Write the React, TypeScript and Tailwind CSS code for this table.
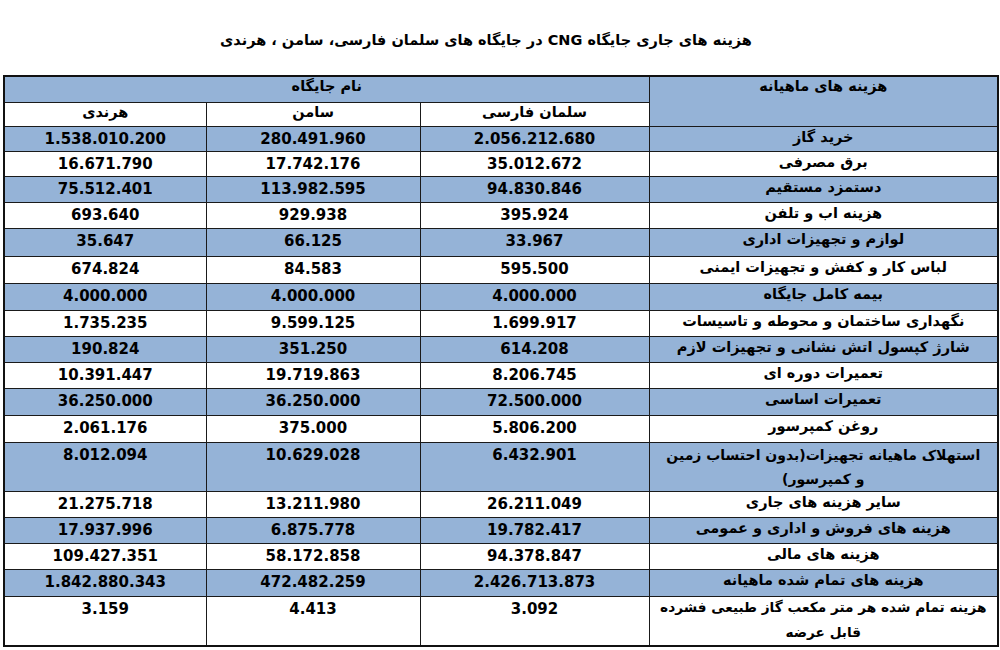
const rows: { label: React.ReactNode; salman: string; samen: string; harandi: string; h: string }[] = [
  { label: 'خرید گاز', salman: '2.056.212.680', samen: '280.491.960', harandi: '1.538.010.200', h: 'h-[25px]' },
  { label: 'برق مصرفی', salman: '35.012.672', samen: '17.742.176', harandi: '16.671.790', h: 'h-[25px]' },
  { label: 'دستمزد مستقیم', salman: '94.830.846', samen: '113.982.595', harandi: '75.512.401', h: 'h-[26px]' },
  { label: 'هزینه اب و تلفن', salman: '395.924', samen: '929.938', harandi: '693.640', h: 'h-[26px]' },
  { label: 'لوازم و تجهیزات اداری', salman: '33.967', samen: '66.125', harandi: '35.647', h: 'h-[28px]' },
  { label: 'لباس کار و کفش و تجهیزات ایمنی', salman: '595.500', samen: '84.583', harandi: '674.824', h: 'h-[27px]' },
  { label: 'بیمه کامل جایگاه', salman: '4.000.000', samen: '4.000.000', harandi: '4.000.000', h: 'h-[27px]' },
  { label: 'نگهداری ساختمان و محوطه و تاسیسات', salman: '1.699.917', samen: '9.599.125', harandi: '1.735.235', h: 'h-[26px]' },
  { label: 'شارژ کپسول اتش نشانی  و تجهیزات لازم', salman: '614.208', samen: '351.250', harandi: '190.824', h: 'h-[26px]' },
  { label: 'تعمیرات دوره ای', salman: '8.206.745', samen: '19.719.863', harandi: '10.391.447', h: 'h-[26px]' },
  { label: 'تعمیرات اساسی', salman: '72.500.000', samen: '36.250.000', harandi: '36.250.000', h: 'h-[27px]' },
  { label: 'روغن کمپرسور', salman: '5.806.200', samen: '375.000', harandi: '2.061.176', h: 'h-[27px]' },
  {
    label: (
      <span className="-mt-[2px] block text-[14px] leading-[24px]">
        استهلاک ماهیانه تجهیزات(بدون احتساب زمین
        <br />
        و کمپرسور)
      </span>
    ),
    salman: '6.432.901',
    samen: '10.629.028',
    harandi: '8.012.094',
    h: 'h-[49px]',
  },
  { label: 'سایر هزینه های جاری', salman: '26.211.049', samen: '13.211.980', harandi: '21.275.718', h: 'h-[26px]' },
  { label: 'هزینه های فروش و اداری و عمومی', salman: '19.782.417', samen: '6.875.778', harandi: '17.937.996', h: 'h-[26px]' },
  { label: 'هزینه های مالی', salman: '94.378.847', samen: '58.172.858', harandi: '109.427.351', h: 'h-[26px]' },
  { label: 'هزینه های تمام شده ماهیانه', salman: '2.426.713.873', samen: '472.482.259', harandi: '1.842.880.343', h: 'h-[27px]' },
  {
    label: (
      <span className="-mt-[4px] block text-[13.7px] leading-[25px]">
        هزینه تمام شده هر متر مکعب گاز طبیعی فشرده
        <br />
        قابل عرضه
      </span>
    ),
    salman: '3.092',
    samen: '4.413',
    harandi: '3.159',
    h: 'h-[48px]',
  },
];

const fa = "font-['DejaVu_Sans',sans-serif] font-bold";
const cell = 'border border-[#1a1a1a] align-top text-center';

export default function App() {
  return (
    <div className="h-[650px] w-[1000px] bg-white text-black overflow-hidden">
      <h1 dir="rtl" className={`${fa} pt-[29px] pr-[28px] text-center text-[14.5px] leading-[22px]`}>
        هزینه های جاری جایگاه CNG در جایگاه های سلمان فارسی، سامن ، هرندی
      </h1>

      <table dir="rtl" className="mt-[24px] ml-[3px] w-[994px] table-fixed border-collapse border-2 border-[#111]">
        <colgroup>
          <col className="w-[349px]" />
          <col className="w-[229px]" />
          <col className="w-[214px]" />
          <col className="w-[202px]" />
        </colgroup>
        <thead>
          <tr className="h-[26px] bg-[#95b3d7]">
            <th rowSpan={2} className={`${cell} ${fa} pt-0 text-[14.5px] leading-[18px]`}>
              هزینه های ماهیانه
            </th>
            <th colSpan={3} className={`${cell} ${fa} pt-0 text-[14.5px] leading-[18px]`}>
              نام جایگاه
            </th>
          </tr>
          <tr className="h-[24px] bg-white">
            <th className={`${cell} ${fa} pt-0 text-[14.5px] leading-[18px]`}>سلمان فارسی</th>
            <th className={`${cell} ${fa} pt-0 text-[14.5px] leading-[18px]`}>سامن</th>
            <th className={`${cell} ${fa} pt-0 text-[14.5px] leading-[18px]`}>هرندی</th>
          </tr>
        </thead>
        <tbody>
          {rows.map((r, i) => (
            <tr key={i} className={`${r.h} ${i % 2 === 0 ? 'bg-[#95b3d7]' : 'bg-white'}`}>
              <td className={`${cell} ${fa} whitespace-nowrap pt-[2px] text-[14.5px] leading-[17px]`}>{r.label}</td>
              {[r.salman, r.samen, r.harandi].map((v, j) => (
                <td
                  key={j}
                  className={`${cell} px-1 pt-[3px] font-['DejaVu_Sans',sans-serif] text-[15px] leading-[18px] font-bold`}
                >
                  {v}
                </td>
              ))}
            </tr>
          ))}
        </tbody>
      </table>
    </div>
  );
}
